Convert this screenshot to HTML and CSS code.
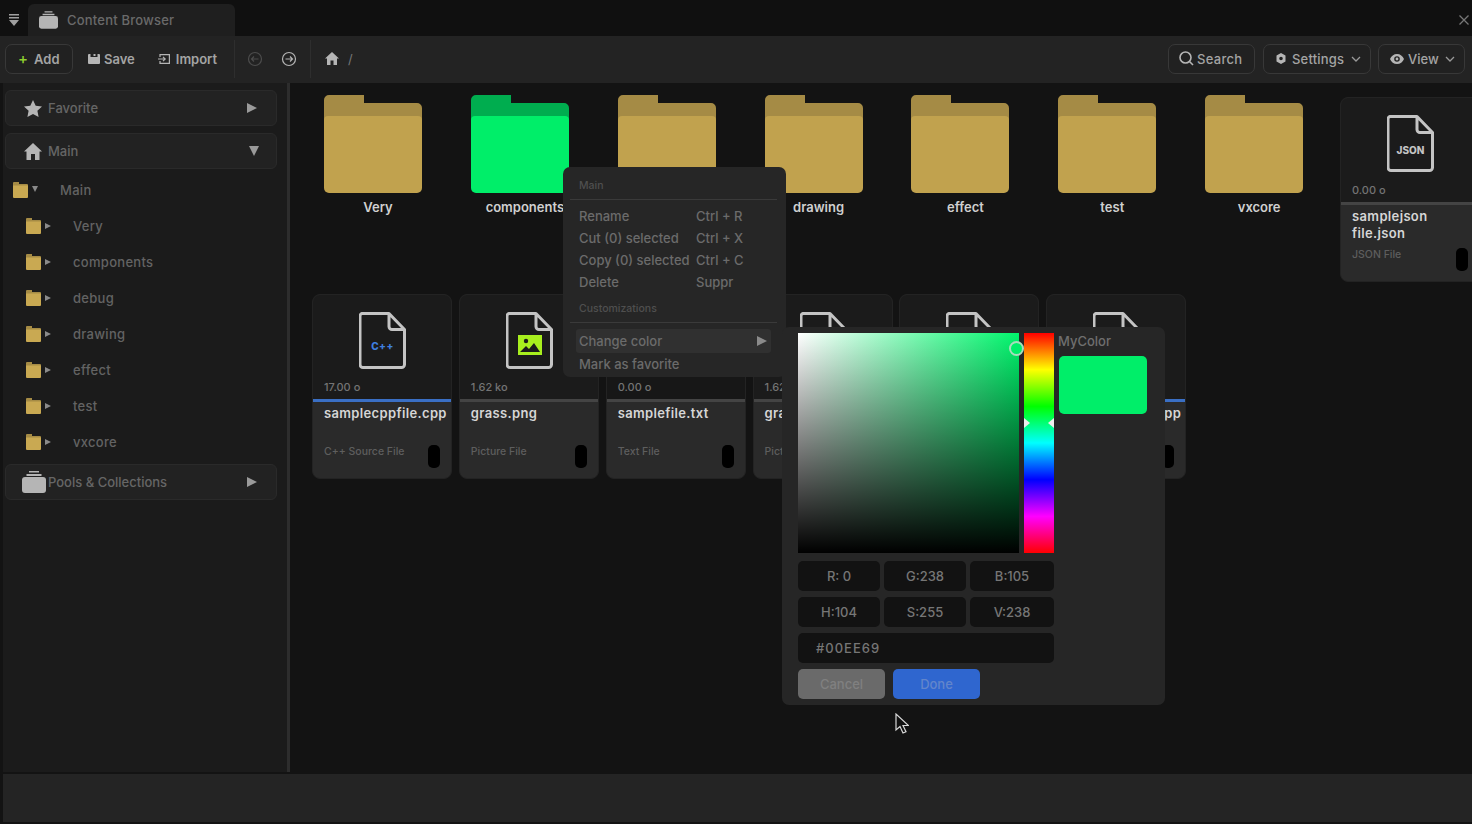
FILE: index.html
```html
<!DOCTYPE html>
<html lang="en">
<head>
  <meta charset="UTF-8" />
  <title>Content Browser</title>
  <link rel="stylesheet" href="styles.css">
</head>
<body>

  <svg class="defs" width="0" height="0">
    <symbol id="folder" viewBox="0 0 98 98">
      <path class="folder-back" d="M0 5a5 5 0 0 1 5-5h35v8h53a5 5 0 0 1 5 5v20H0z"/>
      <path class="folder-front" d="M0 25a4 4 0 0 1 4-4h90a4 4 0 0 1 4 4v68a5 5 0 0 1-5 5H5a5 5 0 0 1-5-5z"/>
    </symbol>
    <symbol id="minifolder" viewBox="0 0 15 16">
      <path fill="#a58b45" d="M0 1a1 1 0 0 1 1-1h5v2h8a1 1 0 0 1 1 1v4H0z"/>
      <path fill="#c9a952" d="M0 3.500h15v11.500a1 1 0 0 1-1 1H1a1 1 0 0 1-1-1z"/>
    </symbol>
    <symbol id="stack" viewBox="0 0 24 22">
      <path fill="currentColor" d="M7 0h10v1.500H7zM4.500 3h15v2h-15z"/>
      <rect fill="currentColor" y="6" width="24" height="16" rx="3"/>
    </symbol>
    <symbol id="file" viewBox="0 0 47 57">
      <path fill="none" stroke="currentColor" stroke-width="3" stroke-linejoin="round" d="M4 1.500h26l15.500 16v35a3 3 0 0 1-3 3H4a3 3 0 0 1-3-3v-48.500a2.500 2.500 0 0 1 3-2.500zM30 1.500v13a3 3 0 0 0 3 3h12.500"/>
    </symbol>
  </svg>

  <!-- Window title -->
  <header class="titlebar">
    <svg class="title-menu" viewBox="0 0 10 12"><path d="M0 0h10v1.500H0zM0 3h10v1.500H0zM0 6h10L5 12z"/></svg>
    <div class="title-tab">
      <svg class="title-tab-icon"><use href="#stack"/></svg>
      <span>Content Browser</span>
    </div>
    <svg class="title-close" viewBox="0 0 10 10"><path d="M.5.500l9 9M9.500.500l-9 9"/></svg>
  </header>

  <!-- Toolbar -->
  <nav class="toolbar">
    <button class="tool tool-box tool-add"><span class="plus">+</span>Add</button>
    <button class="tool tool-save">
      <svg class="tool-icon" viewBox="0 0 12 10"><path d="M0 1a1 1 0 0 1 1-1h1.500v3h7V0h1.500a1 1 0 0 1 1 1v8a1 1 0 0 1-1 1H1a1 1 0 0 1-1-1zM5.500 0h2v2h-2z"/></svg>
      Save
    </button>
    <button class="tool tool-import">
      <svg class="tool-icon tool-icon-line" viewBox="0 0 12 10"><path d="M2 3V.600h9.400v8.800H2V7M0 5h7M5 2.800L7.200 5 5 7.200"/></svg>
      Import
    </button>
    <span class="tool-sep"></span>
    <svg class="nav-circle nav-dim" viewBox="0 0 16 16"><circle cx="8" cy="8" r="6.500"/><path d="M11.500 8h-7M7 5.500L4.500 8 7 10.500"/></svg>
    <svg class="nav-circle" viewBox="0 0 16 16"><circle cx="8" cy="8" r="6.500"/><path d="M4.500 8h7M9 5.500L11.500 8 9 10.500"/></svg>
    <span class="tool-sep tool-sep-second"></span>
    <svg class="home-icon" viewBox="0 0 14 13"><path d="M7 0l7 6.500h-2V13H8.500V8.500h-3V13H2V6.500H0z"/></svg>
    <span class="path-slash">/</span>

    <div class="toolbar-right">
      <button class="tool tool-box tool-search">
        <svg class="tool-icon tool-icon-search" viewBox="0 0 15 15"><circle cx="6.500" cy="6.500" r="5.500"/><path d="M10.500 10.500L14 14"/></svg>
        Search
      </button>
      <button class="tool tool-box tool-settings">
        <svg class="tool-icon" viewBox="0 0 10 11"><path fill-rule="evenodd" d="M5 0l4.500 2.600v5.800L5 11 .5 8.400V2.600zM5 3.700a1.800 1.800 0 1 0 0 3.600 1.800 1.800 0 0 0 0-3.600z"/></svg>
        Settings
        <svg class="caret" viewBox="0 0 10 6"><path d="M1 1l4 4 4-4"/></svg>
      </button>
      <button class="tool tool-box tool-view">
        <svg class="tool-icon" viewBox="0 0 14 10"><path fill-rule="evenodd" d="M7 0c3.200 0 5.800 2 7 5-1.200 3-3.800 5-7 5S1.200 8 0 5c1.200-3 3.800-5 7-5zm0 2.200a2.800 2.800 0 1 0 0 5.600 2.800 2.800 0 0 0 0-5.600zM7 3.600a1.400 1.400 0 1 1 0 2.800 1.400 1.400 0 0 1 0-2.800z"/></svg>
        View
        <svg class="caret" viewBox="0 0 10 6"><path d="M1 1l4 4 4-4"/></svg>
      </button>
    </div>
  </nav>

  <div class="main">

    <!-- Sidebar -->
    <aside class="sidebar">
      <div class="side-head">
        <svg class="side-icon" viewBox="0 0 18 17"><path d="M9 0l2.700 5.700 6.300.8-4.600 4.300 1.200 6.200L9 14l-5.600 3 1.200-6.200L0 6.500l6.300-.8z"/></svg>
        <span class="side-label">Favorite</span>
        <span class="tri-right"></span>
      </div>
      <div class="side-head">
        <svg class="side-icon" viewBox="0 0 18 17"><path d="M9 0l9 8.500h-2.500V17H11v-6H7v6H2.500V8.500H0z"/></svg>
        <span class="side-label">Main</span>
        <span class="tri-down"></span>
      </div>

      <ul class="tree">
        <li class="tree-row tree-root"><svg class="tree-folder"><use href="#minifolder"/></svg><span class="tree-open"></span><span>Main</span></li>
        <li class="tree-row"><svg class="tree-folder"><use href="#minifolder"/></svg><span class="tree-closed"></span><span>Very</span></li>
        <li class="tree-row"><svg class="tree-folder"><use href="#minifolder"/></svg><span class="tree-closed"></span><span>components</span></li>
        <li class="tree-row"><svg class="tree-folder"><use href="#minifolder"/></svg><span class="tree-closed"></span><span>debug</span></li>
        <li class="tree-row"><svg class="tree-folder"><use href="#minifolder"/></svg><span class="tree-closed"></span><span>drawing</span></li>
        <li class="tree-row"><svg class="tree-folder"><use href="#minifolder"/></svg><span class="tree-closed"></span><span>effect</span></li>
        <li class="tree-row"><svg class="tree-folder"><use href="#minifolder"/></svg><span class="tree-closed"></span><span>test</span></li>
        <li class="tree-row"><svg class="tree-folder"><use href="#minifolder"/></svg><span class="tree-closed"></span><span>vxcore</span></li>
      </ul>

      <div class="side-head side-head-pools">
        <svg class="side-icon-pools"><use href="#stack"/></svg>
        <span class="side-label">Pools &amp; Collections</span>
        <span class="tri-right"></span>
      </div>
    </aside>

    <!-- Files -->
    <section class="content">
      <div class="grid">
        <div class="folder-tile"><svg class="folder"><use href="#folder"/></svg><div class="folder-name">Very</div></div>
        <div class="folder-tile folder-green"><svg class="folder"><use href="#folder"/></svg><div class="folder-name">components</div></div>
        <div class="folder-tile"><svg class="folder"><use href="#folder"/></svg><div class="folder-name">debug</div></div>
        <div class="folder-tile"><svg class="folder"><use href="#folder"/></svg><div class="folder-name">drawing</div></div>
        <div class="folder-tile"><svg class="folder"><use href="#folder"/></svg><div class="folder-name">effect</div></div>
        <div class="folder-tile"><svg class="folder"><use href="#folder"/></svg><div class="folder-name">test</div></div>
        <div class="folder-tile"><svg class="folder"><use href="#folder"/></svg><div class="folder-name">vxcore</div></div>

        <div class="card">
          <div class="card-top">
            <div class="file-icon"><svg><use href="#file"/></svg><span class="file-tag">JSON</span></div>
            <div class="card-size">0.00 o</div>
          </div>
          <div class="card-bottom">
            <div class="card-name">samplejson<br>file.json</div>
            <div class="card-foot card-foot-tight"><span class="card-type">JSON File</span><span class="card-pill"></span></div>
          </div>
        </div>

        <div class="card card-cpp">
          <div class="card-top">
            <div class="file-icon"><svg><use href="#file"/></svg><span class="file-tag file-tag-cpp">C++</span></div>
            <div class="card-size">17.00 o</div>
          </div>
          <div class="card-bottom">
            <div class="card-name">samplecppfile.cpp</div>
            <div class="card-foot"><span class="card-type">C++ Source File</span><span class="card-pill"></span></div>
          </div>
        </div>

        <div class="card">
          <div class="card-top">
            <div class="file-icon"><svg><use href="#file"/></svg>
              <svg class="file-picture" viewBox="0 0 24 20"><rect width="24" height="20" fill="#a8ef1e"/><circle cx="8" cy="6" r="2.200" fill="#1b1b1b"/><path fill="#1b1b1b" d="M2 17l6-6 3 3 5-6 6 9z"/></svg>
            </div>
            <div class="card-size">1.62 ko</div>
          </div>
          <div class="card-bottom">
            <div class="card-name">grass.png</div>
            <div class="card-foot"><span class="card-type">Picture File</span><span class="card-pill"></span></div>
          </div>
        </div>

        <div class="card card-dark">
          <div class="card-top">
            <div class="file-icon"><svg><use href="#file"/></svg></div>
            <div class="card-size">0.00 o</div>
          </div>
          <div class="card-bottom">
            <div class="card-name">samplefile.txt</div>
            <div class="card-foot"><span class="card-type">Text File</span><span class="card-pill"></span></div>
          </div>
        </div>

        <div class="card">
          <div class="card-top">
            <div class="file-icon"><svg><use href="#file"/></svg></div>
            <div class="card-size">1.62 ko</div>
          </div>
          <div class="card-bottom">
            <div class="card-name">grass.png</div>
            <div class="card-foot"><span class="card-type">Picture File</span><span class="card-pill"></span></div>
          </div>
        </div>

        <div class="card">
          <div class="card-top">
            <div class="file-icon"><svg><use href="#file"/></svg></div>
            <div class="card-size">0.00 o</div>
          </div>
          <div class="card-bottom">
            <div class="card-name">samplefile.txt</div>
            <div class="card-foot"><span class="card-type">Text File</span><span class="card-pill"></span></div>
          </div>
        </div>

        <div class="card card-cpp">
          <div class="card-top">
            <div class="file-icon"><svg><use href="#file"/></svg></div>
            <div class="card-size">17.00 o</div>
          </div>
          <div class="card-bottom">
            <div class="card-name">samplecppfile.cpp</div>
            <div class="card-foot"><span class="card-type">C++ Source File</span><span class="card-pill"></span></div>
          </div>
        </div>
      </div>
    </section>
  </div>

  <footer class="statusbar"></footer>

  <!-- Context menu -->
  <div class="menu">
    <div class="menu-title">Main</div>
    <div class="menu-rule"></div>
    <div class="menu-row"><span>Rename</span><span class="menu-key">Ctrl + R</span></div>
    <div class="menu-row"><span>Cut (0) selected</span><span class="menu-key">Ctrl + X</span></div>
    <div class="menu-row"><span>Copy (0) selected</span><span class="menu-key">Ctrl + C</span></div>
    <div class="menu-row"><span>Delete</span><span class="menu-key">Suppr</span></div>
    <div class="menu-title menu-title-second">Customizations</div>
    <div class="menu-rule"></div>
    <div class="menu-row menu-row-active"><span>Change color</span><span class="menu-arrow"></span></div>
    <div class="menu-row"><span>Mark as favorite</span></div>
  </div>

  <!-- Color picker -->
  <div class="picker">
    <div class="picker-left">
      <div class="picker-top">
        <div class="sv-box"><span class="sv-thumb"></span></div>
        <div class="hue-bar"><span class="hue-mark hue-mark-left"></span><span class="hue-mark hue-mark-right"></span></div>
      </div>
      <div class="picker-fields">
        <div class="field">R: 0</div>
        <div class="field">G:238</div>
        <div class="field">B:105</div>
        <div class="field">H:104</div>
        <div class="field">S:255</div>
        <div class="field">V:238</div>
        <div class="field field-hex">#00EE69</div>
      </div>
      <div class="picker-actions">
        <button class="picker-btn picker-cancel">Cancel</button>
        <button class="picker-btn picker-done">Done</button>
      </div>
    </div>
    <div class="picker-right">
      <div class="picker-name">MyColor</div>
      <div class="picker-swatch"></div>
    </div>
  </div>

  <svg class="cursor" viewBox="0 0 14 22"><path d="M1 1v16l4-3.500 3 6.500 3-1.300-3-6.200h5.500z"/></svg>

</body>
</html>
```

FILE: styles.css
```css
* {
  box-sizing: border-box;
  margin: 0;
  padding: 0;
}

html,
body {
  height: 100%;
  overflow: hidden;
}

body {
  display: flex;
  flex-direction: column;
  position: relative;
  font-family: Inter, 'Noto Sans', sans-serif;
  font-size: 13px;
  background: #131313;
  color: #8a8a8a;
}

button {
  font-family: inherit;
  background: none;
  border: none;
  color: inherit;
}

ul {
  list-style: none;
}

.defs {
  position: absolute;
}

/* Title bar */
.titlebar {
  height: 36px;
  flex: none;
  display: flex;
  align-items: flex-end;
  background: #101010;
  padding-left: 9px;
}

.title-menu {
  width: 10px;
  height: 12px;
  margin-bottom: 10px;
  fill: #a0a0a0;
}

.title-tab {
  width: 207px;
  height: 32px;
  margin-left: 9px;
  display: flex;
  align-items: center;
  gap: 9px;
  padding-left: 11px;
  background: #1f1f1f;
  border-radius: 6px 6px 0 0;
  color: #6a6a6a;
  font-size: 13px;
  font-weight: 500;
  letter-spacing: 0.2px;
}

.title-tab-icon {
  width: 19px;
  height: 18px;
  color: #b5b5b5;
}

.title-close {
  width: 10px;
  height: 10px;
  margin: 0 3px 11px auto;
  fill: none;
  stroke: #777;
  stroke-width: 1.3;
}

/* Toolbar */
.toolbar {
  height: 47px;
  flex: none;
  display: flex;
  align-items: center;
  padding: 0 7px 2px 5px;
  background: #232323;
}

.tool {
  height: 30px;
  display: flex;
  align-items: center;
  color: #a4a4a4;
  font-size: 13px;
  font-weight: 600;
}

.tool-box {
  border: 1px solid #383838;
  border-radius: 7px;
  background: #212121;
}

.tool-add {
  width: 68px;
  padding-left: 12px;
  gap: 6px;
}

.plus {
  color: #8fcf2f;
  font-size: 15px;
  font-weight: 500;
}

.tool-icon {
  fill: #b5b5b5;
  flex: none;
}

.tool-icon-line,
.tool-icon-search {
  fill: none;
  stroke: #b5b5b5;
  stroke-width: 1.2;
}

.tool-icon-search {
  stroke-width: 1.6;
}

.tool-save {
  margin-left: 15px;
  gap: 4px;
}

.tool-save .tool-icon {
  width: 12px;
  height: 10px;
}

.tool-import {
  margin-left: 23px;
  gap: 6px;
}

.tool-import .tool-icon {
  width: 12px;
  height: 10px;
}

.tool-sep {
  width: 1px;
  height: 38px;
  margin-left: 17px;
  background: #2e2e2e;
}

.tool-sep-second {
  margin-left: 13px;
}

.nav-circle {
  width: 16px;
  height: 16px;
  margin-left: 12px;
  fill: none;
  stroke: #b5b5b5;
  stroke-width: 1.2;
}

.nav-circle + .nav-circle {
  margin-left: 18px;
}

.nav-dim {
  margin-left: 12px;
  stroke: #4c4c4c;
}

.home-icon {
  width: 14px;
  height: 13px;
  margin-left: 14px;
  fill: #b5b5b5;
}

.path-slash {
  margin-left: 9px;
  color: #777;
}

.toolbar-right {
  display: flex;
  gap: 7px;
  margin-left: auto;
}

.tool-search {
  width: 87px;
  margin-right: 1px;
  padding-left: 10px;
  gap: 3px;
  font-weight: 500;
  letter-spacing: 0.3px;
}

.tool-search .tool-icon {
  width: 15px;
  height: 15px;
}

.tool-settings {
  width: 108px;
  padding-left: 12px;
  gap: 6px;
  font-weight: 500;
  letter-spacing: 0.2px;
}

.tool-settings .tool-icon {
  width: 10px;
  height: 11px;
}

.tool-view {
  width: 87px;
  padding-left: 11px;
  gap: 4px;
  font-weight: 500;
}

.tool-view .tool-icon {
  width: 14px;
  height: 10px;
}

.caret {
  width: 10px;
  height: 6px;
  margin-left: auto;
  margin-right: 9px;
  fill: none;
  stroke: #999;
  stroke-width: 1.3;
}

/* Main area */
.main {
  flex: 1;
  min-height: 0;
  display: flex;
  padding-left: 3px;
}

.sidebar {
  width: 287px;
  flex: none;
  padding: 7px 10px 0 2px;
  background: #1b1b1b;
  border-right: 3px solid #2d2d2d;
}

.side-head {
  height: 36px;
  margin-bottom: 7px;
  display: flex;
  align-items: center;
  padding: 0 18px;
  background: #222;
  border: 1px solid #2a2a2a;
  border-radius: 6px;
}

.side-icon {
  width: 18px;
  height: 17px;
  fill: #b5b5b5;
  flex: none;
}

.side-label {
  margin-left: 6px;
  color: #666;
  font-size: 13px;
  font-weight: 500;
}

.tri-right {
  margin-left: auto;
  margin-right: 1px;
  border-left: 10px solid #9a9a9a;
  border-top: 5.500px solid transparent;
  border-bottom: 5.500px solid transparent;
}

.tri-down {
  margin-left: auto;
  margin-right: -1px;
  border-top: 10px solid #9a9a9a;
  border-left: 5.500px solid transparent;
  border-right: 5.500px solid transparent;
}

.side-head-pools {
  margin-top: 4px;
  padding-left: 16px;
}

.side-icon-pools {
  width: 24px;
  height: 22px;
  flex: none;
  color: #b5b5b5;
}

.side-head-pools .side-label {
  margin-left: 2px;
}

.tree {
  margin-top: -4px;
}

.tree-row {
  height: 36px;
  display: flex;
  align-items: center;
  padding-left: 21px;
  color: #636363;
  font-size: 13px;
  font-weight: 500;
  letter-spacing: 0.3px;
}

.tree-root {
  padding-left: 8px;
}

.tree-folder {
  width: 15px;
  height: 16px;
  flex: none;
}

.tree-closed,
.tree-open {
  flex: none;
  width: 28px;
  margin-left: 4px;
}

.tree-closed::before {
  content: "";
  display: block;
  width: 0;
  border-left: 6px solid #8a8a8a;
  border-top: 3.500px solid transparent;
  border-bottom: 3.500px solid transparent;
}

.tree-open::before {
  content: "";
  display: block;
  width: 0;
  margin-top: -2px;
  border-top: 6px solid #8a8a8a;
  border-left: 3.500px solid transparent;
  border-right: 3.500px solid transparent;
}

/* File grid */
.content {
  flex: 1;
  min-width: 0;
  overflow: hidden;
  padding: 14px 0 0 22px;
}

.grid {
  display: grid;
  grid-template-columns: repeat(8, 140px);
  grid-template-rows: 185px 185px;
  column-gap: 6.860px;
  row-gap: 12px;
}

.folder-tile {
  padding-left: 12px;
  margin-top: -2px;
  --back: #a58b45;
  --front: #c1a24e;
}

.folder-green {
  --back: #00ad4f;
  --front: #00ee69;
}

.folder {
  display: block;
  width: 98px;
  height: 98px;
}

.folder-back {
  fill: var(--back);
}

.folder-front {
  fill: var(--front);
}

.folder-name {
  margin: 6px 0 0 -12px;
  padding-right: 8px;
  text-align: center;
  color: #d0d0d0;
  font-size: 13px;
  font-weight: 600;
  line-height: 16px;
  white-space: nowrap;
}

.card {
  display: flex;
  flex-direction: column;
  overflow: hidden;
  border-radius: 8px;
  background: #2a2a2a;
  border: 1px solid #232323;
  --rule: #444;
}

.card-cpp {
  --rule: #3a6fc4;
}

.card-top {
  height: 107px;
  flex: none;
  display: flex;
  flex-direction: column;
  padding: 17px 11px 0;
  background: #1b1b1b;
  border-bottom: 3px solid var(--rule);
}

.card-dark .card-top {
  background: #171717;
}

.file-icon {
  position: relative;
  width: 47px;
  height: 57px;
  margin: 0 auto 0 35px;
  color: #c4c4c4;
}

.file-icon > svg:first-child {
  display: block;
  width: 47px;
  height: 57px;
}

.file-tag {
  position: absolute;
  left: 0;
  right: 0;
  top: 29px;
  text-align: center;
  font-size: 10px;
  font-weight: 800;
  color: #c4c4c4;
  line-height: 12px;
}

.file-tag-cpp {
  top: 28px;
  color: #3f7fe0;
  letter-spacing: 0.5px;
}

.file-picture {
  position: absolute;
  left: 12px;
  top: 23px;
  width: 24px;
  height: 20px;
}

.card-size {
  margin-top: 11px;
  color: #747474;
  font-size: 11px;
  font-weight: 500;
  line-height: 14px;
}

.card-bottom {
  flex: 1;
  display: flex;
  flex-direction: column;
  padding: 3px 11px 0;
}

.card-name {
  color: #d6d6d6;
  font-size: 13px;
  font-weight: 600;
  line-height: 17px;
  letter-spacing: 0.35px;
  white-space: nowrap;
}

.card-foot {
  display: flex;
  align-items: flex-start;
  justify-content: space-between;
  margin-top: 21px;
}

.card-foot-tight {
  margin-top: 4px;
}

.card-type {
  margin-top: 2px;
  color: #5e5e5e;
  font-size: 10.500px;
  font-weight: 500;
  line-height: 14px;
}

.card-pill {
  width: 12px;
  height: 23px;
  margin-top: 2px;
  flex: none;
  background: #000;
  border-radius: 5px;
}

.statusbar {
  height: 48px;
  flex: none;
  margin: 2px 0 2px 3px;
  background: #242424;
}

/* Context menu */
.menu {
  position: absolute;
  left: 563px;
  top: 167px;
  width: 223px;
  height: 210px;
  padding: 0 9px 0 7px;
  background: #262626;
  border-radius: 7px;
  color: #6b6b6b;
  font-size: 13px;
  font-weight: 500;
}

.menu-title {
  padding: 12px 9px 0;
  height: 32px;
  color: #4f4f4f;
  font-size: 10.500px;
}

.menu-title-second {
  height: 29px;
  padding-top: 9px;
}

.menu-rule {
  height: 1px;
  margin-bottom: 5px;
  background: #3a3a3a;
}

.menu-row {
  height: 22px;
  display: flex;
  align-items: center;
  padding-left: 9px;
}

.menu-row .menu-key {
  position: absolute;
  left: 133px;
}

.menu-row-active {
  height: 24px;
  margin: 6px 6px 0 6px;
  padding: 0 4px 0 3px;
  background: #303030;
  border-radius: 3px;
  justify-content: space-between;
}

.menu-arrow {
  border-left: 10px solid #8a8a8a;
  border-top: 5.500px solid transparent;
  border-bottom: 5.500px solid transparent;
}

/* Color picker */
.picker {
  position: absolute;
  left: 782px;
  top: 327px;
  width: 383px;
  height: 378px;
  display: flex;
  gap: 4px;
  padding: 6px 16px 0;
  background: #262626;
  border-radius: 7px;
}

.picker-left {
  width: 256px;
  flex: none;
}

.picker-top {
  display: flex;
  gap: 5px;
}

.sv-box {
  position: relative;
  width: 221px;
  height: 220px;
  background: linear-gradient(to top, #000, transparent), linear-gradient(to right, #fff, #00f56c);
}

.sv-thumb {
  position: absolute;
  left: 211px;
  top: 8px;
  width: 15px;
  height: 15px;
  background: #00ee69;
  border: 2px solid #a8dcbc;
  border-radius: 50%;
}

.hue-bar {
  position: relative;
  width: 30px;
  height: 220px;
  background: linear-gradient(#f00, #ff0, #0f0, #0ff, #00f, #f0f, #f00);
}

.hue-mark {
  position: absolute;
  top: 85px;
  border-top: 5px solid transparent;
  border-bottom: 5px solid transparent;
}

.hue-mark-left {
  left: 0;
  border-left: 6px solid #eee;
}

.hue-mark-right {
  right: 0;
  border-right: 6px solid #eee;
}

.picker-fields {
  display: grid;
  grid-template-columns: 82px 82px 1fr;
  gap: 6px 4px;
  margin-top: 8px;
}

.field {
  height: 30px;
  display: flex;
  align-items: center;
  justify-content: center;
  background: #121212;
  border-radius: 5px;
  color: #767676;
  font-size: 13px;
  font-weight: 500;
}

.field-hex {
  grid-column: 1 / -1;
  justify-content: flex-start;
  padding-left: 18px;
  letter-spacing: 1px;
}

.picker-actions {
  display: flex;
  gap: 8px;
  margin-top: 6px;
}

.picker-btn {
  width: 87px;
  height: 30px;
  border-radius: 5px;
  font-size: 13px;
  font-weight: 500;
}

.picker-cancel {
  background: #6a6a6a;
  color: #808080;
}

.picker-done {
  background: #2f66cf;
  color: #6285cb;
}

.picker-name {
  color: #6f6f6f;
  font-size: 13px;
  font-weight: 500;
  line-height: 16px;
}

.picker-swatch {
  width: 88px;
  height: 58px;
  margin: 7px 0 0 1px;
  background: #00ee69;
  border-radius: 5px;
}

.cursor {
  position: absolute;
  left: 895px;
  top: 713px;
  width: 14px;
  height: 22px;
  fill: #111;
  stroke: #d8d8d8;
  stroke-width: 1.2;
}
```
